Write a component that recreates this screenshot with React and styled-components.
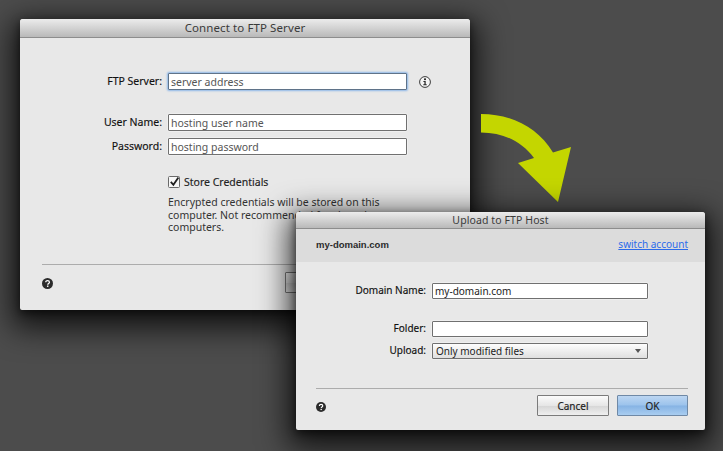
import React from 'react';
import styled, { createGlobalStyle } from 'styled-components';

const GlobalStyle = createGlobalStyle`
    html, body {
        margin: 0;
        padding: 0;
        background: #4a4a4a;
    }
`;

const UI_FONT = `"Noto Sans", "DejaVu Sans", sans-serif`;

// ============= Desktop ==============

const Desktop = styled.div`
    position: relative;
    width: 723px;
    height: 451px;
    overflow: hidden;
    font-family: ${UI_FONT};
    color: #222;
    background: #4c4c4c;
`;

const Window = styled.div`
    position: absolute;
    left: ${props => props.$left}px;
    top: ${props => props.$top}px;
    width: ${props => props.$width}px;
    height: ${props => props.$height}px;
    display: flex;
    flex-direction: column;
    font-size: ${props => props.$size}px;
    border-radius: 3px 3px 2px 2px;
    background: #e8e8e8;
    box-shadow: 0 10px 30px 8px rgba(0,0,0,0.75), 0 3px 8px rgba(0,0,0,0.55);
`;

const TitleBar = styled.div`
    flex: none;
    box-sizing: border-box;
    height: ${props => props.$height}px;
    padding-bottom: 1px;
    display: flex;
    align-items: center;
    justify-content: center;
    font-size: ${props => props.$size}px;
    letter-spacing: 0.1px;
    color: #3a3a3a;
    border-bottom: 1px solid #8d8d8d;
    background: linear-gradient(#ececec, #b9b9b9);
    border-radius: 3px 3px 0 0;
`;

const Form = styled.div`
    display: grid;
    grid-template-columns: ${props => props.$label}px ${props => props.$field}px auto;
    column-gap: 6px;
    align-items: center;
    padding-top: ${props => props.$top}px;
`;

const Label = styled.div`
    text-align: right;
    color: #111;
    white-space: nowrap;
    margin-top: ${props => props.$gap || 0}px;
    padding-bottom: 2px;
    line-height: 14px;
    -webkit-text-stroke: 0.15px #111;
`;

const Input = styled.div`
    box-sizing: border-box;
    height: ${props => props.$height}px;
    margin-top: ${props => props.$gap || 0}px;
    padding-left: 2px;
    display: flex;
    align-items: center;
    white-space: nowrap;
    color: ${props => (props.$placeholder ? '#555' : '#222')};
    background: #fff;
    border: 1px solid ${props => (props.$focused ? '#5f7389' : '#707070')};
    box-shadow: ${props => (props.$focused ? '0 0 2px 1px #8db7e8' : '0 0 0 0.5px rgba(255,255,255,0.6)')};
    border-radius: 1px;
`;

const Select = styled(Input)`
    justify-content: space-between;
    padding: 0 6px 0 3px;
    background: linear-gradient(#fdfdfd, #dfdfdf);
`;

const Caret = styled.span`
    width: 0;
    height: 0;
    border-left: 3.5px solid transparent;
    border-right: 3.5px solid transparent;
    border-top: 4px solid #555;
`;

const CheckRow = styled.div`
    grid-column: 2;
    margin-top: 20px;
    display: flex;
    align-items: center;
    gap: 4px;
    line-height: 14px;
    -webkit-text-stroke: 0.15px #222;
`;

const Note = styled.div`
    grid-column: 2 / 4;
    margin-top: 7px;
    width: 235px;
    line-height: 12.5px;
    color: #333;
`;

const Spacer = styled.div`
    flex: 1;
`;

const Footer = styled.div`
    flex: none;
    margin: 0 ${props => props.$right}px 0 ${props => props.$left}px;
    padding-top: ${props => props.$pad}px;
    height: ${props => props.$height}px;
    box-sizing: border-box;
    display: flex;
    align-items: flex-start;
    justify-content: space-between;
    border-top: 1px solid #acacac;
`;

const HelpIcon = styled.svg`
    display: block;
    margin-top: ${props => props.$top}px;
`;

const InfoIcon = styled.svg`
    margin: 1px 0 0 6px;
`;

const Buttons = styled.div`
    display: flex;
    gap: 8px;
`;

const Button = styled.div`
    box-sizing: border-box;
    width: ${props => props.$width || 72}px;
    height: 21px;
    display: flex;
    align-items: center;
    justify-content: center;
    color: #222;
    -webkit-text-stroke: 0.15px #222;
    border: 1px solid ${props => (props.$primary ? '#6f89a6' : '#7b7b7b')};
    border-radius: 1px;
    background: ${props => (props.$primary
        ? 'linear-gradient(#bcd6f2, #9cc3ec 48%, #86b3e4 52%, #a9cdf0)'
        : 'linear-gradient(#fbfbfb, #e6e6e6 50%, #d6d6d6 52%, #efefef)')};
`;

const AccountBar = styled.div`
    flex: none;
    box-sizing: border-box;
    height: 33px;
    padding: 0 17px 3px 20px;
    display: flex;
    align-items: center;
    justify-content: space-between;
    background: #dcdcdc;
`;

const AccountName = styled.div`
    font-family: "Liberation Sans", sans-serif;
    font-weight: 700;
    font-size: 9.5px;
    color: #2b2b2b;
`;

const AccountLink = styled.a`
    color: #2c6bea;
    text-decoration: underline;
`;

const Arrow = styled.svg`
    position: absolute;
    left: 480px;
    top: 113px;
`;

// ============= Drawings ==============

const Help = ({ size, top }) => (
    <HelpIcon $top={top} width={size} height={size} viewBox="0 0 12 12">
        <circle cx="6" cy="6" r="6" fill="#2b2b2b" />
        <path d="M4.1 4.7c0-1.2 0.9-1.8 2-1.8s2 0.6 2 1.6c0 1.5-1.8 1.4-1.8 2.8" fill="none" stroke="#fff" strokeWidth="1.4" />
        <rect x="5.4" y="8.2" width="1.6" height="1.5" fill="#fff" />
    </HelpIcon>
);

const Info = () => (
    <InfoIcon width="12" height="12" viewBox="0 0 12 12">
        <circle cx="6" cy="6" r="5.4" fill="#f5f5f5" stroke="#3a3a3a" strokeWidth="1" />
        <rect x="5" y="2.4" width="2" height="1.7" fill="#2b2b2b" />
        <path d="M4.4 5h2.3v3.3h1v1H4.3v-1h1.1V6H4.4z" fill="#2b2b2b" />
    </InfoIcon>
);

const Checkbox = () => (
    <svg width="12" height="12" viewBox="0 0 12 12">
        <rect x="0.5" y="0.5" width="11" height="11" rx="1" fill="#f7f7f7" stroke="#6a6a6a" />
        <path d="M2.8 5.8l2.6 3L10.4 1.6" fill="none" stroke="#1f1f1f" strokeWidth="1.8" />
    </svg>
);

// ============= App ==============

export default function App() {
    return (
        <Desktop>
            <GlobalStyle />

            <Window $left={20} $top={19} $width={450} $height={291} $size={10.5}>
                <TitleBar $height={19} $size={11.5}>Connect to FTP Server</TitleBar>
                <Form $top={35} $label={142} $field={239}>
                    <Label>FTP Server:</Label>
                    <Input $height={17} $focused $placeholder>server address</Input>
                    <Info />
                    <Label $gap={24}>User Name:</Label>
                    <Input $height={17} $gap={24} $placeholder>hosting user name</Input>
                    <span />
                    <Label $gap={7}>Password:</Label>
                    <Input $height={17} $gap={7} $placeholder>hosting password</Input>
                    <span />
                    <CheckRow><Checkbox />Store Credentials</CheckRow>
                    <Note>Encrypted credentials will be stored on this computer. Not recommended for shared computers.</Note>
                </Form>
                <Spacer />
                <Footer $left={22} $right={33} $height={46} $pad={7}>
                    <Help size={11} top={6} />
                    <Buttons>
                        <Button>Cancel</Button>
                        <Button $primary>OK</Button>
                    </Buttons>
                </Footer>
            </Window>

            <Arrow width="93" height="91" viewBox="480 113 93 91">
                <path d="M481 114C512 114 538 128 553 152.5L571 147L558 202L518 163L534 158C522 142 504 132.5 481 132.5Z" fill="#c4d600" />
            </Arrow>

            <Window $left={296} $top={212} $width={409} $height={218} $size={10}>
                <TitleBar $height={17} $size={10.5}>Upload to FTP Host</TitleBar>
                <AccountBar>
                    <AccountName>my-domain.com</AccountName>
                    <AccountLink>switch account</AccountLink>
                </AccountBar>
                <Form $top={21} $label={130} $field={216}>
                    <Label>Domain Name:</Label>
                    <Input $height={16}>my-domain.com</Input>
                    <span />
                    <Label $gap={22}>Folder:</Label>
                    <Input $height={16} $gap={22} />
                    <span />
                    <Label $gap={6}>Upload:</Label>
                    <Select $height={16} $gap={6}>Only modified files<Caret /></Select>
                    <span />
                </Form>
                <Spacer />
                <Footer $left={20} $right={17} $height={42} $pad={6}>
                    <Help size={10} top={7} />
                    <Buttons>
                        <Button>Cancel</Button>
                        <Button $primary $width={71}>OK</Button>
                    </Buttons>
                </Footer>
            </Window>
        </Desktop>
    );
}
